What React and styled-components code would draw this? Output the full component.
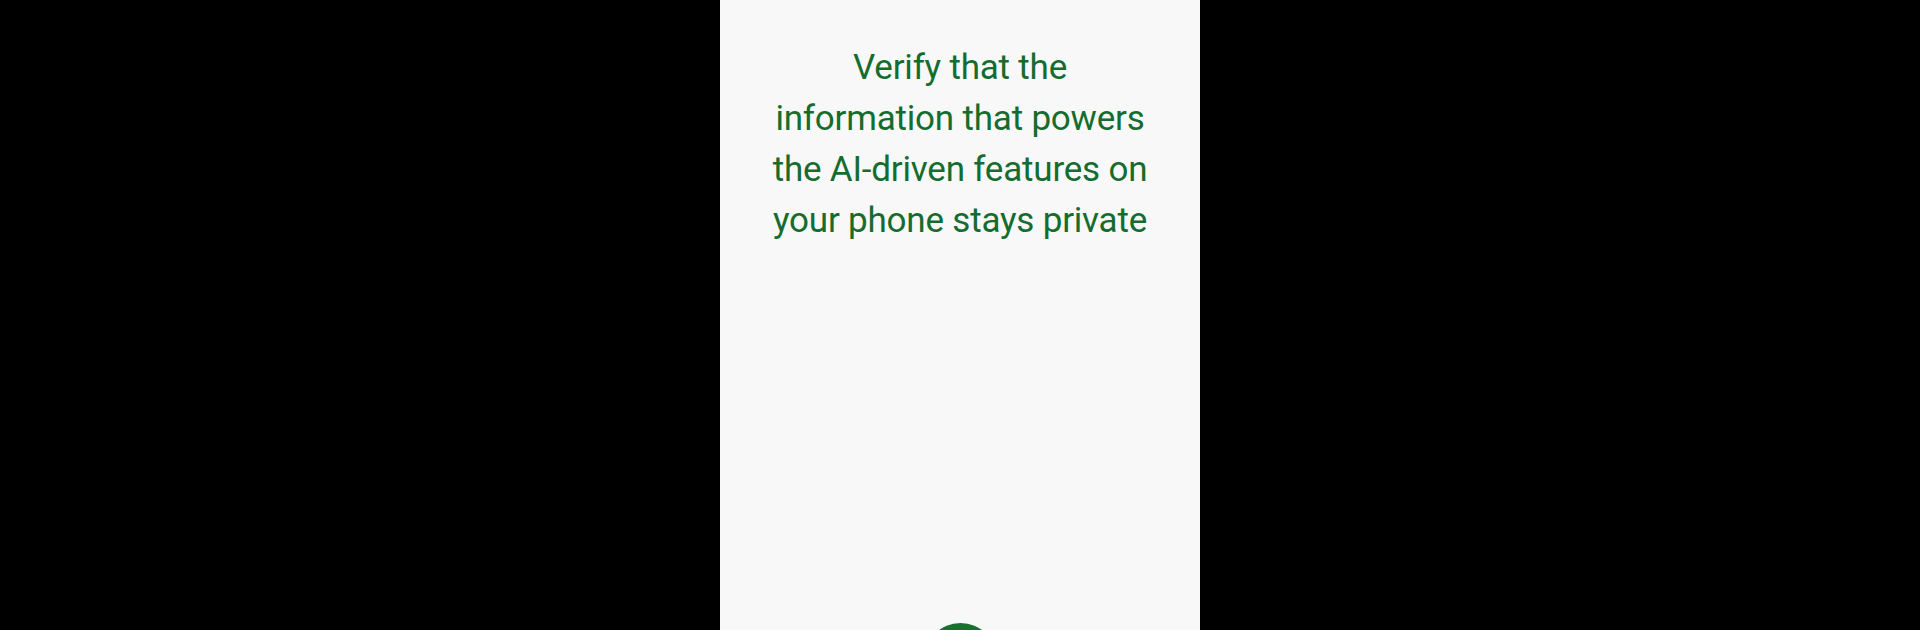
import styled, { createGlobalStyle } from "styled-components";

const GlobalStyle = createGlobalStyle`
  html, body {
    margin: 0;
    padding: 0;
    background: #000;
  }
  #root {
    height: 630px;
  }
`;

const Screen = styled.div`
  display: flex;
  justify-content: center;
  height: 630px;
  background: #000;
`;

const Panel = styled.main`
  display: flex;
  flex-direction: column;
  align-items: center;
  width: 480px;
  height: 630px;
  overflow: hidden;
  background: #f8f8f8;
  box-sizing: border-box;
  padding-top: 42px;
`;

const Title = styled.h1`
  margin: 0;
  width: 400px;
  text-align: center;
  font-family: Roboto, "Noto Sans", sans-serif;
  font-weight: 400;
  font-size: 35px;
  line-height: 51px;
  letter-spacing: -0.2px;
  color: #146c2e;
`;

const Footer = styled.div`
  margin-top: auto;
  display: flex;
  justify-content: center;
`;

const Fab = styled.button`
  width: 73px;
  height: 73px;
  margin-bottom: -66px;
  border: none;
  border-radius: 50%;
  background: #18712f;
`;

const App = () => {
  return (
    <>
      <GlobalStyle />
      <Screen>
        <Panel>
          <Title>
            Verify that the
            <br />
            information that powers
            <br />
            the AI-driven features on
            <br />
            your phone stays private
          </Title>
          <Footer>
            <Fab aria-label="Continue" />
          </Footer>
        </Panel>
      </Screen>
    </>
  );
};

export default App;
